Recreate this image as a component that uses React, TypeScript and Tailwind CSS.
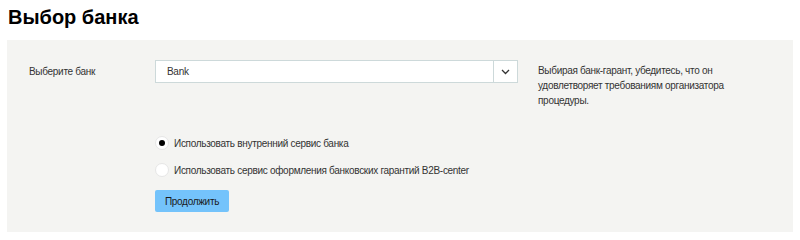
import React, { useState } from 'react';

const font = { fontFamily: '"Liberation Sans", Arial, sans-serif' };

export default function App() {
  const [mode, setMode] = useState<'internal' | 'b2b'>('internal');

  return (
    <div className="w-[800px] h-[240px] bg-white text-[#333]" style={font}>
      {/* Header */}
      <h1 className="h-[40px] pl-[8px] pt-[5px] text-[20px] font-bold leading-[24px] text-black">Выбор банка</h1>

      {/* Panel */}
      <div className="mx-[7px] h-[192px] bg-[#f4f4f2] pt-[20px] text-[10px] tracking-[-0.3px]">
        <div className="flex items-start">
          <div className="w-[148px] pl-[22px] pt-[5px] leading-[14px]">Выберите банк</div>

          <div className="flex h-[23px] w-[363px] items-stretch border border-[#cdd9da] bg-white">
            <div className="flex flex-1 items-center pl-[11px] text-[#333]">Bank</div>
            <div className="flex w-[24px] items-center justify-center border-l border-[#cdd9da]">
              <svg width="9" height="6" viewBox="0 0 9 6" fill="none">
                <path d="M1 1l3.5 3.5L8 1" stroke="#333" strokeWidth="1.3" />
              </svg>
            </div>
          </div>

          <p className="ml-[20px] w-[200px] pt-[3px] leading-[15px]">
            Выбирая банк-гарант, убедитесь, что он удовлетворяет требованиям организатора процедуры.
          </p>
        </div>

        <div className="ml-[148px] mt-[28px] flex flex-col">
          <label className="flex h-[14px] cursor-pointer items-center gap-[5px]" onClick={() => setMode('internal')}>
            <span className="flex h-[14px] w-[14px] items-center justify-center rounded-full border border-[#e6e6e6] bg-white">
              {mode === 'internal' && <span className="h-[6px] w-[6px] rounded-full bg-black" />}
            </span>
            Использовать внутренний сервис банка
          </label>
          <label className="mt-[13px] flex h-[14px] cursor-pointer items-center gap-[5px]" onClick={() => setMode('b2b')}>
            <span className="flex h-[14px] w-[14px] items-center justify-center rounded-full border border-[#e6e6e6] bg-white">
              {mode === 'b2b' && <span className="h-[6px] w-[6px] rounded-full bg-black" />}
            </span>
            Использовать сервис оформления банковских гарантий B2B-center
          </label>
          <button className="mt-[13px] h-[22px] w-[74px] rounded-[2px] bg-[#74c3fb] text-[#1a1a1a]">Продолжить</button>
        </div>
      </div>
    </div>
  );
}
